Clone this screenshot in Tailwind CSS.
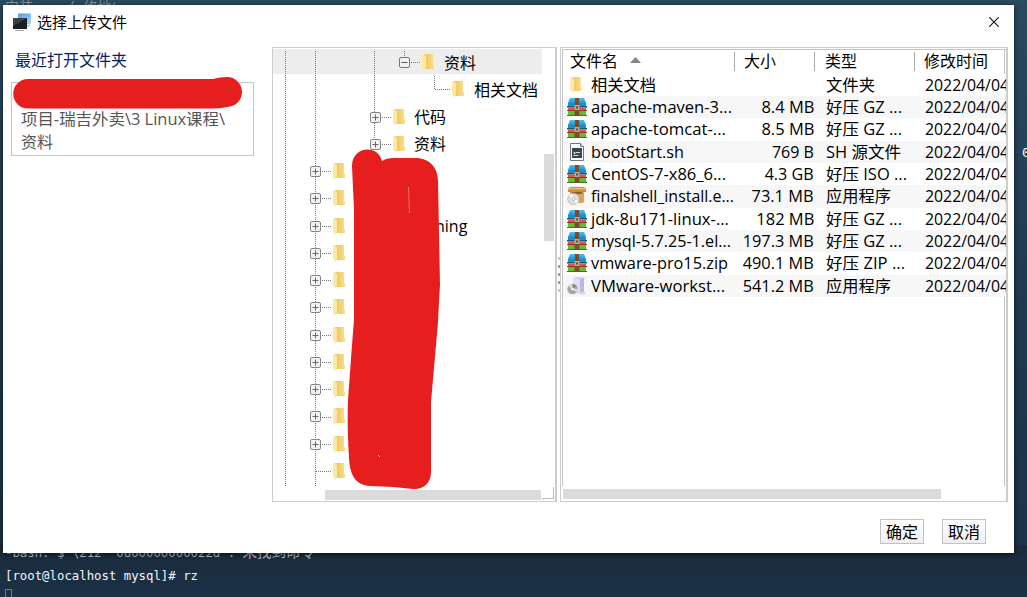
<!DOCTYPE html>
<html lang="zh">
<head>
<meta charset="utf-8">
<title>选择上传文件</title>
<script src="https://cdn.jsdelivr.net/npm/@tailwindcss/browser@4"></script>
</head>
<body class="relative w-[1027px] h-[597px] overflow-hidden bg-linear-to-b from-[#2a4a60] via-[#1f3a50] to-[#1c3148] text-black font-['Open_Sans','Noto_Sans_CJK_SC',sans-serif] text-[16px] leading-none">
<svg class="absolute w-0 h-0">
  <defs>
    <linearGradient id="fg" x2="1"><stop offset=".3" stop-color="#f0cc69"/><stop offset="1" stop-color="#fbdf8b"/></linearGradient>
    <linearGradient id="blue" y2="1" x2="0"><stop stop-color="#45c2f4"/><stop offset="1" stop-color="#1178b5"/></linearGradient>
    <linearGradient id="sky" x2="1" y2="1"><stop stop-color="#4c9fe6"/><stop offset="1" stop-color="#a6d4fb"/></linearGradient>
    <symbol id="folder" viewBox="0 0 12 17"><path d="M2 0h9v11h1v4H2z" fill="url(#fg)"/><path d="M0 0l4 2v12l-1 1v2l-3-3z" fill="#ffe8a4"/></symbol>
    <symbol id="zip" viewBox="0 0 20 18">
      <path d="M3 0h14l2 5v3H1V5z" fill="url(#blue)"/><path d="M1 5h18v3H1z" fill="#1c8fcb"/><path d="M0 8h20v1.500H0z" fill="#0d5b8c"/>
      <path d="M1 9.500h18v2.500H1z" fill="#e2553a"/><path d="M0 12h20v1H0z" fill="#9c2f20"/>
      <path d="M1 13h18v4H1z" fill="#62bd35"/><path d="M0 17h20v1H0z" fill="#2d7d1e"/>
      <path d="M8 0h4l.5 18h-5z" fill="#80492a"/><path d="M7.500 7h5v5h-5z" fill="#b9aa98"/><path d="M9 8.500h2v2H9z" fill="#59483b"/>
    </symbol>
    <symbol id="sh" viewBox="0 0 20 18"><path d="M3.500.5h10l3 3v14h-13z" fill="#fff" stroke="#777"/><path d="M13.500.5v3h3" fill="#ddd" stroke="#777"/><path d="M5 5h10v10H5z" fill="#344750"/><path d="M6.500 9l2 1-2 1M9 9.500h4M6.500 12.500h5" stroke="#d5dde0" fill="none"/></symbol>
    <symbol id="box" viewBox="0 0 20 18"><path d="M1 1l3-1h12l3 1v4H1z" fill="#c98f3c"/><path d="M1 1h18v1.500H1z" fill="#e8bd74"/><path d="M3 5h14v10l-2 1H8L3 10z" fill="#d9a352"/><path d="M5 5h10v2H5z" fill="#8e5f20"/><circle cx="6.500" cy="12" r="5.800" fill="#dededc" stroke="#aaa" stroke-width=".6"/><path d="M6.500 12L2 8.500 5 6.500zM6.500 12l5 2-2 2.800z" fill="#fff"/><circle cx="6.500" cy="12" r="1.500" fill="#fff" stroke="#999" stroke-width=".6"/></symbol>
    <symbol id="inst" viewBox="0 0 20 18"><path d="M6 1l4-1 8 .5-1 2v12l2 2-3 1-9-2z" fill="#cfcff0"/><path d="M13 2l4-.5v14l-4 1z" fill="#b8b8e0"/><path d="M6 1l7 1v14l-7-1z" fill="#dedef8"/><path d="M12 16l5-1 2 1.500-4 1.500z" fill="#ddd"/><circle cx="5.500" cy="12" r="5.200" fill="#a5a8a4"/><path d="M5.500 12L1.500 9l3-2zM5.500 12l5 0-1 3z" fill="#e5ebe2"/><path d="M5.500 12l1-5 3 2z" fill="#6f9c62"/><circle cx="5.500" cy="12" r="1.300" fill="#fff"/></symbol>
    <symbol id="plus" viewBox="0 0 11 11"><rect x=".5" y=".5" width="10" height="10" rx="1.500" fill="#f3f3f3" stroke="#858585"/><path d="M2.500 5.500h6M5.500 2.500v6" stroke="#666"/></symbol>
    <symbol id="minus" viewBox="0 0 11 11"><rect x=".5" y=".5" width="10" height="10" rx="1.500" fill="#f3f3f3" stroke="#777"/><path d="M2.500 5.500h6" stroke="#555"/></symbol>
  </defs>
</svg>

<!-- terminal behind the dialog -->
<div class="absolute left-[5px] top-0 h-[5px] w-[110px] overflow-hidden text-[#8b979f] text-[14px] font-['Liberation_Mono','Noto_Sans_CJK_SC',monospace]"><span class="block whitespace-pre leading-[16px]">安装  . / 修地包</span></div>
<div class="absolute inset-x-0 top-[545px] h-[52px] overflow-hidden bg-linear-to-b from-[#1a2b3b] to-[#1c3147] pl-[5px] text-white font-['DejaVu_Sans_Mono','Noto_Sans_CJK_SC',monospace] text-[12.33px] whitespace-pre"><div class="h-[14px] leading-[14px] text-[#b5bec6]">-bash: $'\212  0800000000022d': <span class="text-[14.500px] leading-[14px]">未找到命令</span></div><div class="h-[16px] leading-[16px] mt-[9px] text-[#f4f6f8]">[root@localhost mysql]# rz</div><div class="w-[7px] h-[12px] border border-[#12b55c] mt-[5px]"></div></div>
<div class="absolute left-[1022px] top-[146px] text-white text-[13px] font-['DejaVu_Sans_Mono',monospace]">0</div>

<main class="absolute left-[3px] top-[5px] w-[1011px] h-[548px] bg-white shadow-[0_1px_5px_#000a] flex flex-col">
  <header class="h-[42px] shrink-0 flex items-start pl-[10px] pr-[15px]">
    <svg class="w-[18px] h-[18px] mt-[8px]" viewBox="0 0 18 18"><path d="M5 .5h13v11H5z" fill="url(#sky)"/><path d="M0 5h14v11H0z" fill="#1d1f21"/><path d="M0 5h14L0 13z" fill="#3d4145"/><path d="M2 17.500h9M14 13h3" stroke="#aaa"/></svg>
    <h1 class="ml-[6px] mt-[10px] text-[15px]">选择上传文件</h1>
    <svg class="ml-auto mt-[12px] w-[10px] h-[10px]" viewBox="0 0 10 10"><path d="M.3.3l9.400 9.400M9.700.3L.3 9.700" stroke="#111" stroke-width="1.100"/></svg>
  </header>
  <div class="flex h-[455px] shrink-0">
    <aside class="relative w-[269px] pl-[8px]">
      <h2 class="pl-[4px] pt-[5px] text-[#0b1f5c]">最近打开文件夹</h2>
      <div class="mt-[14px] w-[243px] h-[74px] border border-[#c6c6c6] pl-[9px] pt-[25px] leading-[23px] text-[#555] whitespace-nowrap"><div id="recent" class="w-max origin-left">项目-瑞吉外卖\3 Linux课程\</div><div>资料</div></div>
      <svg class="absolute left-[10px] top-[29px] w-[230px] h-[34px]" viewBox="0 0 230 34"><path d="M15 3H200Q207 1 214 1A15 15 0 0 1 214 31Q207 32.500 200 32.500H15A14.700 14.700 0 0 1 15 3z" fill="#e71e1e"/></svg>
    </aside>

    <section class="relative w-[285px] border border-r-2 border-[#cdcdcd] overflow-hidden">
      <svg class="absolute left-0 top-0 w-[282px] h-[453px]" viewBox="273 48 282 453" fill="none" stroke="#777" stroke-dasharray="1 1">
        <path d="M273 49h269v25H273z" fill="#ededed" stroke="none"/>
        <path d="M285.500 51v435M315.500 51v435M374.500 51v93M404.500 51v11M434.500 76v14"/>
        <path id="ticks"/>
      </svg>
      <div id="tree" class="relative pt-[0.900px]"></div>
      <div class="absolute right-[1px] top-[106px] w-[10px] h-[87px] bg-[#dbdbdb]"></div>
      <div class="absolute left-[52px] top-[442px] w-[216px] h-[10px] bg-[#dbdbdb]"></div>
      <div class="absolute left-[269px] top-[439px] w-[12px] h-[12px] border-r border-b border-[#bbb]"></div>
      <svg class="absolute left-0 top-0 w-[282px] h-[453px]" viewBox="273 48 282 453"><path d="M352 166C352 146 378 144 382 161Q386 158 394 158H415C430 158 438 168 438 181L440 285Q439 300 438 322L431 402V472C431 485 421 490 413 489Q395 486.500 370 486C356 485 350 476 349 458Q347 425 348 400L352 345 354 320V210z" fill="#e71e1e"/><path d="M408.500 187l1 26" stroke="#f27c7c" stroke-width=".9"/><path d="M378 455l2 2" stroke="#ffc4c4"/></svg>
    </section>

    <div class="w-[3px] flex flex-col justify-center gap-[5px] items-center"><i class="w-[2px] h-[3px] bg-[#c9c9c9]"></i><i class="w-[2px] h-[3px] bg-[#999]"></i><i class="w-[2px] h-[3px] bg-[#999]"></i><i class="w-[2px] h-[3px] bg-[#999]"></i><i class="w-[2px] h-[3px] bg-[#c9c9c9]"></i></div>

    <section class="w-[448px] border border-r-2 border-[#cdcdcd] pl-px pt-px overflow-hidden">
      <div class="relative h-[437px] w-[444px] border-t border-l border-[#c4c4c4]">
        <div class="absolute right-[1px] top-0 w-px h-full bg-[#c4c4c4]"></div>
        <div class="relative flex h-[23.500px] items-start pl-[7px] pt-[2px] whitespace-nowrap">
          <div class="w-[165px] h-[19px] border-r border-[#aaa] flex pt-px">文件名<svg class="ml-[12px] mt-[4px] w-[11px] h-[6px]" viewBox="0 0 11 6"><path d="M5.500 0L11 6H0z" fill="#858585"/></svg></div>
          <div class="w-[80px] h-[19px] border-r border-[#aaa] pl-[9px] pt-px">大小</div>
          <div class="w-[100px] h-[19px] border-r border-[#aaa] pl-[10px] pt-px">类型</div>
          <div class="pl-[9px] pt-px">修改时间</div>
        </div>
        <div id="files" class="relative"></div>
      </div>
      <div class="mt-[3px] ml-[1px] w-[378px] h-[10px] bg-[#dbdbdb]"></div>
    </section>
  </div>
  <footer class="flex justify-end gap-[18px] pr-[28px] pt-[17px]">
    <button class="w-[44px] h-[25px] border border-[#c2c2c2] bg-linear-to-b from-white to-[#efefef] text-[16px] leading-[24px]">确定</button>
    <button class="w-[44px] h-[25px] border border-[#c2c2c2] bg-linear-to-b from-white to-[#efefef] text-[16px] leading-[24px]">取消</button>
  </footer>
</main>

<script>
const rows = [[399,'minus','资料'],[429,'','相关文档'],[370,'plus','代码'],[370,'plus','资料']];
for (let i = 0; i < 11; i++) rows.push([310, 'plus', i === 2 ? 'ning' : '']);
rows.push([310, '', '']);
let ticks = '';
document.getElementById('tree').innerHTML = rows.map(([x, icon, t], i) => {
  const y = Math.round(62 + i * 27.27) + .5;
  ticks += `M${icon ? x + 12 : x + 6} ${y}H${x + 22}`;
  return `<div class="h-[27.270px] flex items-center whitespace-nowrap" style="padding-left:${x - 273}px">
    <svg class="w-[11px] h-[11px] shrink-0">${icon ? `<use href="#${icon}"/>` : ''}</svg>
    <svg class="w-[12px] h-[17px] ml-[12px] shrink-0"><use href="#folder"/></svg>
    <span style="margin-left:${t === 'ning' ? 90 : x === 370 ? 9 : 10}px">${t}</span></div>`;
}).join('');
document.getElementById('ticks').setAttribute('d', ticks);

const files = [
 ['folder','相关文档',65,'',0,'文件夹',49],
 ['zip','apache-maven-3...',141,'8.4 MB',53,'好压 GZ ...',76],
 ['zip','apache-tomcat-...',135,'8.5 MB',53,'好压 GZ ...',76],
 ['sh','bootStart.sh',93,'769 B',42,'SH 源文件',75],
 ['zip','CentOS-7-x86_6...',135,'4.3 GB',49,'好压 ISO ...',81],
 ['box','finalshell_install.e...',143,'73.1 MB',62,'应用程序',65],
 ['zip','jdk-8u171-linux-...',138,'182 MB',58,'好压 GZ ...',76],
 ['zip','mysql-5.7.25-1.el...',140,'197.3 MB',71,'好压 GZ ...',76],
 ['zip','vmware-pro15.zip',137,'490.1 MB',71,'好压 ZIP ...',79],
 ['inst','VMware-workst...',134,'541.2 MB',71,'应用程序',65]];
document.getElementById('files').innerHTML = files.map(([ic, n, nw, s, sw, t, tw], i) =>
  `<div class="h-[22.350px] w-[445px] flex items-center whitespace-nowrap ${i % 2 ? 'bg-[#f7f7f7]' : 'bg-white'}">
   <div class="w-[28px] pl-[4px] shrink-0">${ic === 'folder' ? '<svg class="w-[12px] h-[16px] ml-[3px]"><use href="#folder"/></svg>' : `<svg class="w-[20px] h-[18px]"><use href="#${ic}"/></svg>`}</div>
   <div class="w-[145px] shrink-0"><span class="block w-max origin-left" data-w="${nw}">${n}</span></div>
   <div class="w-[78px] shrink-0 flex justify-end"><span class="block w-max origin-right" data-w="${sw}">${s}</span></div>
   <div class="w-[99px] pl-[12px] shrink-0"><span class="block w-max origin-left" data-w="${tw}">${t}</span></div>
   <div class="w-[95px] pl-[12px] overflow-hidden"><span class="block w-max origin-left" data-w="84">2022/04/04</span></div></div>`).join('');
document.getElementById('recent').dataset.w = 204;

function fit() {
  document.querySelectorAll('[data-w]').forEach(e => {
    const w = +e.dataset.w;
    e.style.transform = 'none';
    if (w && e.offsetWidth) e.style.transform = `scaleX(${w / e.getBoundingClientRect().width})`;
  });
}
fit();
addEventListener('load', () => { fit(); requestAnimationFrame(fit); document.fonts.ready.then(fit); setTimeout(fit, 100); });
</script>
</body>
</html>
